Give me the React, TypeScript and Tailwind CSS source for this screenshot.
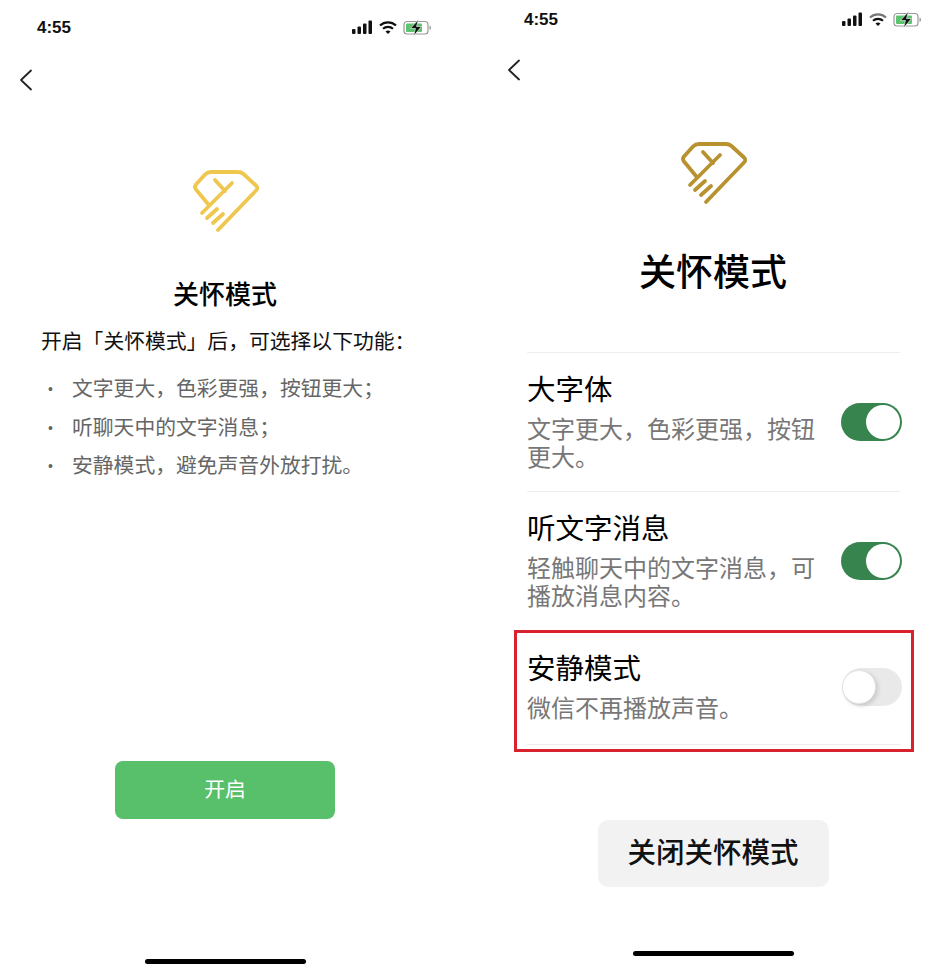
const cjk = "font-['Liberation_Sans','Noto_Sans_CJK_SC',sans-serif]";

function Logo({ color, className }: { color: string; className: string }) {
  return (
    <svg viewBox="0 0 90 80" fill="none" stroke={color} strokeWidth="3.8" strokeLinecap="round" strokeLinejoin="round" className={className}>
      <path d="M28 44 16 29.5Q14 27 16 24.5L25 14.5Q27.500 12 31 12H58Q61 12 63.500 14L76 25.500Q78.500 28 76 30.500L38 70" />
      <path d="M52 23 22 53" />
      <path d="M35 20 45 31" />
      <path d="M27 58 37 49" />
      <path d="M33 63 43 54" />
    </svg>
  );
}

function StatusIcons({ dim }: { dim?: boolean }) {
  return (
    <svg viewBox="0 0 82 18" className="h-[18px] w-[82px]">
      <rect x="0" y="10" width="3.5" height="5" rx="1" fill="#111" />
      <rect x="5.5" y="7.5" width="3.5" height="7.5" rx="1" fill="#111" />
      <rect x="11" y="4.5" width="3.5" height="10.5" rx="1" fill="#111" />
      <rect x="16.5" y="1.5" width="3.5" height="13.5" rx="1" fill="#111" />
      <path d="M28 6.5a12 12 0 0 1 16 0" fill="none" stroke={dim ? "#777" : "#111"} strokeWidth="2.2" />
      <path d="M31 9.8a7.5 7.5 0 0 1 10 0" fill="none" stroke="#111" strokeWidth="2.2" />
      <path d="M33.5 12.6 36 15l2.5-2.4a3.6 3.6 0 0 0-5 0Z" fill="#111" />
      <rect x="52" y="2.5" width="24" height="12.5" rx="3" fill="none" stroke="#9a9a9a" strokeWidth="1.2" />
      <rect x="54" y="4.5" width="16" height="8.5" rx="1" fill="#5cc46e" />
      <path d="M77.5 6.5v4.5a2.4 2.4 0 0 0 0-4.5Z" fill="#9a9a9a" />
      <path d="M66.5 0.5 58.5 9.5h5l-2 7.5 8-9.5h-5l2-7Z" fill="#111" stroke="#fff" strokeWidth="0.6" />
    </svg>
  );
}

function Back() {
  return (
    <svg viewBox="0 0 14 22" fill="none" stroke="#222" strokeWidth="1.8" strokeLinecap="round" strokeLinejoin="round" className="h-[22px] w-[14px]">
      <path d="M12 1.5 2 11l10 9.5" />
    </svg>
  );
}

function Toggle({ on }: { on?: boolean }) {
  return on ? (
    <div className="flex h-[38px] w-[61px] shrink-0 items-center justify-end rounded-full bg-[#37844e] pr-[2px]">
      <div className="h-[34px] w-[34px] rounded-full bg-white" />
    </div>
  ) : (
    <div className="flex h-[38px] w-[60px] shrink-0 items-center rounded-full bg-[#e9e9e9]">
      <div className="h-[34px] w-[34px] rounded-full border border-[#e4e4e4] bg-white shadow-[2px_2px_4px_rgba(0,0,0,0.14)]" />
    </div>
  );
}

function Row({ title, lines, on }: { title: string; lines: string[]; on?: boolean }) {
  return (
    <div className="flex h-[139px] items-center justify-between border-t border-[#efefef]">
      <div>
        <div className="text-[28.5px] leading-[36px] text-black">{title}</div>
        <div className="mt-[8px] w-[300px] text-[24px] leading-[28px] text-[#777]">
          {lines.map((l) => (
            <div key={l}>{l}</div>
          ))}
        </div>
      </div>
      <div className="-mr-[2px]">
        <Toggle on={on} />
      </div>
    </div>
  );
}

export default function App() {
  return (
    <div className={`flex h-[975px] w-[952px] overflow-hidden bg-white ${cjk}`}>
      {/* left phone */}
      <div className="flex w-[450px] shrink-0 flex-col items-center">
        <div className="mt-[19px] flex h-[18px] w-full items-center justify-between pl-[37px] pr-[16px]">
          <span className="text-[17px] font-bold text-[#111]">4:55</span>
          <StatusIcons />
        </div>
        <div className="mt-[32px] w-full pl-[19px]">
          <Back />
        </div>
        <Logo color="#efc64e" className="mt-[69px] h-[80px] w-[90px]" />
        <div className="mt-[37px] text-[26px] leading-[36px] font-medium text-black">关怀模式</div>
        <div className="mt-[13px] w-full pl-[41px] text-[20.8px] leading-[32px] text-[#111]">开启「关怀模式」后，可选择以下功能：</div>
        <ul className="mt-[15px] flex w-full flex-col gap-[6.5px] pl-[48px] text-[20.8px] leading-[32px] text-[#666]">
          {["文字更大，色彩更强，按钮更大；", "听聊天中的文字消息；", "安静模式，避免声音外放打扰。"].map((t) => (
            <li key={t} className="flex items-center">
              <span className="w-[24px] text-[14px]">•</span>
              {t}
            </li>
          ))}
        </ul>
        <button className="mt-[279px] h-[58px] w-[220px] rounded-[8px] bg-[#58bf6b] text-[20.8px] text-white">开启</button>
        <div className="mt-[140px] h-[5px] w-[161px] rounded-full bg-black" />
      </div>

      {/* right phone */}
      <div className="flex w-[502px] shrink-0 flex-col items-center">
        <div className="mt-[11px] flex h-[18px] w-full items-center justify-between pl-[74px] pr-[28px]">
          <span className="text-[17px] font-bold text-[#111]">4:55</span>
          <StatusIcons dim />
        </div>
        <div className="mt-[30px] w-full pl-[57px]">
          <Back />
        </div>
        <Logo color="#b8922f" className="mt-[51px] ml-[24px] h-[80px] w-[90px]" />
        <div className="mt-[37px] ml-[24px] text-[37px] leading-[50px] font-medium text-black">关怀模式</div>
        <div className="mt-[53px] w-full pl-[77px] pr-[52px]">
          <Row title="大字体" lines={["文字更大，色彩更强，按钮", "更大。"]} on />
          <Row title="听文字消息" lines={["轻触聊天中的文字消息，可", "播放消息内容。"]} on />
        </div>
        <div className="ml-[64px] w-[400px] self-start border-[3px] border-[#d8222e] px-[10px]">
          <div className="flex h-[112px] items-center justify-between border-b border-[#eeeeee] pb-[4px]">
            <div>
              <div className="text-[28.5px] leading-[36px] text-black">安静模式</div>
              <div className="mt-[8px] text-[24px] leading-[28px] text-[#777]">微信不再播放声音。</div>
            </div>
            <div className="-mr-[1px]">
              <Toggle />
            </div>
          </div>
          <div className="h-[4px]" />
        </div>
        <button className="mt-[68px] ml-[24px] h-[67px] w-[231px] rounded-[10px] bg-[#f2f2f2] text-[28.5px] font-medium text-[#111]">关闭关怀模式</button>
        <div className="mt-[64px] ml-[24px] h-[5px] w-[161px] rounded-full bg-black" />
      </div>
    </div>
  );
}
